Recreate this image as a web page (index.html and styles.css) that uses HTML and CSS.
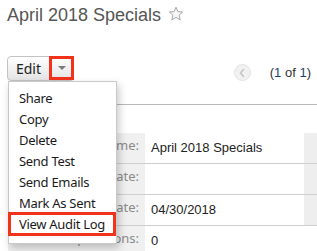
FILE: index.html
```html
<!DOCTYPE html>
<html>
<head>
<meta charset="utf-8">
<link rel="stylesheet" href="styles.css">
</head>
<body>
<div class="page">
  <header class="head">
    <h1 class="title">April 2018 Specials</h1>
    <svg class="star" width="16" height="16" viewBox="0 0 16 16"><path d="M8 1.2 L9.9 5.6 L14.7 6 L11.1 9.2 L12.2 13.9 L8 11.4 L3.8 13.9 L4.9 9.2 L1.3 6 L6.1 5.6 Z" fill="#f6f6f6" stroke="#a9a9a9" stroke-width="1" stroke-linejoin="round"/></svg>
  </header>

  <div class="toolbar">
    <div class="btn-group">
      <button class="btn btn-edit">Edit</button>
      <button class="btn btn-caret"><span class="caret"></span></button>
      <ul class="menu">
        <li class="item">Share</li>
        <li class="item">Copy</li>
        <li class="item">Delete</li>
        <li class="item">Send Test</li>
        <li class="item">Send Emails</li>
        <li class="item">Mark As Sent</li>
        <li class="item item-marked">View Audit Log</li>
      </ul>
    </div>
    <div class="pager">
      <span class="prev"><svg width="8" height="10" viewBox="0 0 8 10"><path d="M5.5 1.5 L2.5 5 L5.5 8.5" fill="none" stroke="#c4c4c4" stroke-width="1.6" stroke-linecap="round" stroke-linejoin="round"/></svg></span>
      <span class="count">(<span class="num">1</span> of <span class="num">1</span>)</span>
    </div>
  </div>

  <div class="detail">
    <div class="row">
      <div class="label">Name:</div>
      <div class="value">April 2018 Specials</div>
      <div class="label label-r"></div>
    </div>
    <div class="row">
      <div class="label">Start Date:</div>
      <div class="value"></div>
      <div class="label label-r"></div>
    </div>
    <div class="row">
      <div class="label">End Date:</div>
      <div class="value">04/30/2018</div>
      <div class="label label-r"></div>
    </div>
    <div class="row">
      <div class="label">Impressions:</div>
      <div class="value">0</div>
      <div class="blank"></div>
    </div>
  </div>
</div>
</body>
</html>
```

FILE: styles.css
```css
* { box-sizing: border-box; }
html, body { margin: 0; padding: 0; background: #fff; }
body { width: 317px; height: 251px; overflow: hidden; font-family: "Liberation Sans", Arial, sans-serif; }

.head {
  display: flex;
  align-items: flex-start;
  padding: 4px 0 0 7px;
  gap: 7px;
}
.title {
  margin: 0;
  font-family: "Liberation Sans", Arial, sans-serif;
  font-weight: normal;
  font-size: 18px;
  line-height: 22px;
  color: #555;
}
.star { margin-top: 2px; flex: none; }

.toolbar {
  margin: 30px 0 0 8px;
  padding-bottom: 23px;
  border-bottom: 1px solid #b8b8b8;
  display: flex;
  justify-content: space-between;
  align-items: flex-start;
}

.btn-group {
  position: relative;
  z-index: 10;
  display: flex;
  margin-left: -1px;
}
.btn {
  height: 25px;
  margin: 0;
  border: 1px solid #c3c3c3;
  background: linear-gradient(#ffffff, #e4e4e4);
  color: #222;
  font-family: "Noto Sans", "DejaVu Sans", sans-serif;
  font-size: 14px;
  padding: 0;
}
.btn-edit {
  width: 43px;
  border-radius: 4px 0 0 4px;
  padding: 0 0 1px 0;
  text-align: center;
}
.btn-caret {
  position: relative;
  width: 24px;
  border-left: none;
  border-radius: 0 4px 4px 0;
  display: flex;
  align-items: center;
  justify-content: center;
}
.btn-caret::after {
  content: "";
  position: absolute;
  left: -1px; right: -1px; top: -1px; bottom: 0;
  border: 3px solid #f3321c;
}
.caret {
  width: 0; height: 0;
  border-left: 4px solid transparent;
  border-right: 4px solid transparent;
  border-top: 4px solid #7a7a7a;
  margin-top: -2px;
}

.menu {
  position: absolute;
  top: 25px;
  left: 1px;
  width: 109px;
  margin: 0;
  padding: 6px 0 8px;
  list-style: none;
  background: #fff;
  border: 1px solid #c9c9c9;
  box-shadow: 2px 4px 8px rgba(0,0,0,0.22);
  z-index: 5;
}
.item {
  position: relative;
  height: 21px;
  line-height: 21px;
  padding-left: 10px;
  font-family: "Noto Sans", "DejaVu Sans", sans-serif;
  font-size: 13px;
  letter-spacing: -0.3px;
  color: #1a1a1a;
  white-space: nowrap;
}
.item-marked::after {
  content: "";
  position: absolute;
  left: -1px; right: 0; top: -2px; bottom: -1px;
  border: 3px solid #f3321c;
}

.pager {
  display: flex;
  align-items: center;
  margin-top: 8px;
  padding-right: 6px;
  gap: 19px;
}
.prev {
  width: 17px; height: 17px;
  border-radius: 50%;
  background: #f1f1f1;
  border: 1px solid #e2e2e2;
  display: flex;
  align-items: center;
  justify-content: center;
}
.count {
  font-family: "Liberation Sans", Arial, sans-serif;
  font-size: 13px;
  color: #333;
}
.num { color: #1d3f73; }

.detail {
  margin: 28px 0 0 8px;
}
.row {
  display: grid;
  grid-template-columns: 137px 159px 1fr;
  height: 31px;
  border-bottom: 1px solid #cfcfcf;
}
.row:last-child { border-bottom: none; }
.label {
  background: #f0f0f0;
  text-align: right;
  padding-right: 6px;
  line-height: 25px;
  font-family: "Noto Sans", "DejaVu Sans", sans-serif;
  font-size: 13px;
  color: #8a8a8a;
  white-space: nowrap;
  overflow: hidden;
}
.label-r { background: #eeeeee; }
.value {
  padding-left: 6px;
  line-height: 29px;
  font-family: "Liberation Sans", Arial, sans-serif;
  font-size: 13px;
  color: #222;
  white-space: nowrap;
}
.blank { background: #fff; }
```
